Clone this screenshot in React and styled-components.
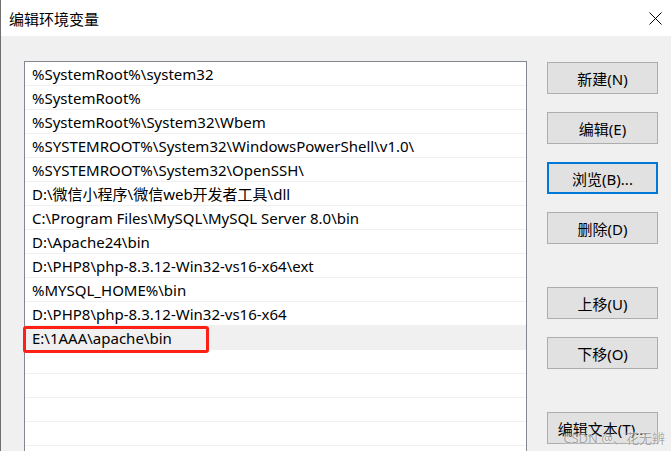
import React from 'react';
import styled, { createGlobalStyle } from 'styled-components';

const GlobalStyle = createGlobalStyle`
  html, body {
    margin: 0;
    padding: 0;
    background: #f0f0f0;
  }
  * { box-sizing: border-box; }
`;

const font = `"Noto Sans", "Noto Sans CJK SC", sans-serif`;

const Window = styled.div`
  position: relative;
  width: 671px;
  height: 451px;
  overflow: hidden;
  background: #f0f0f0;
  border-left: 1px solid #6f6f6f;
  font-family: ${font};
  color: #000;
`;

const TitleBar = styled.div`
  height: 36px;
  background: #fff;
  display: flex;
  align-items: center;
  justify-content: space-between;
  padding: 0 9px 0 8px;
`;

const Title = styled.div`
  font-size: 15px;
  font-family: "Noto Sans CJK SC", sans-serif;
`;

const CloseBtn = styled.div`
  width: 14px;
  height: 14px;
  display: flex;
  align-items: center;
  justify-content: center;
`;

const Body = styled.div`
  display: flex;
  gap: 20px;
  padding: 25px 0 0 23px;
`;

const List = styled.div`
  width: 503px;
  height: 420px;
  background: #fff;
  border: 1px solid #828790;
  flex-shrink: 0;
`;

const Row = styled.div`
  position: relative;
  height: 24px;
  display: flex;
  align-items: center;
  padding-left: 7px;
  font-size: 15px;
  border-bottom: 1px solid #f0f0f0;
  background: ${(p) => (p.$selected ? '#f0f0f0' : '#fff')};
  white-space: nowrap;
`;

const Highlight = styled.div`
  position: absolute;
  z-index: 2;
  left: -2px;
  top: 0;
  width: 186px;
  height: 27px;
  border: 3px solid #ff2015;
  border-radius: 3px;
`;

const Buttons = styled.div`
  display: flex;
  flex-direction: column;
  padding-top: 1px;
`;

const Button = styled.div`
  width: 111px;
  height: 32px;
  margin-top: ${(p) => p.$gap || 0}px;
  background: #e1e1e1;
  border: ${(p) => (p.$focused ? '2px solid #0078d7' : '1px solid #adadad')};
  display: flex;
  align-items: center;
  justify-content: center;
  font-size: 15px;
  font-family: ${font};
`;

const Watermark = styled.div`
  position: absolute;
  z-index: 3;
  right: 6px;
  bottom: 4px;
  font-size: 13px;
  color: rgba(150, 150, 150, 0.85);
  text-shadow: 0 0 2px #fff;
  font-family: ${font};
`;

const paths = [
  '%SystemRoot%\\system32',
  '%SystemRoot%',
  '%SystemRoot%\\System32\\Wbem',
  '%SYSTEMROOT%\\System32\\WindowsPowerShell\\v1.0\\',
  '%SYSTEMROOT%\\System32\\OpenSSH\\',
  'D:\\微信小程序\\微信web开发者工具\\dll',
  'C:\\Program Files\\MySQL\\MySQL Server 8.0\\bin',
  'D:\\Apache24\\bin',
  'D:\\PHP8\\php-8.3.12-Win32-vs16-x64\\ext',
  '%MYSQL_HOME%\\bin',
  'D:\\PHP8\\php-8.3.12-Win32-vs16-x64',
  'E:\\1AAA\\apache\\bin',
  '',
  '',
  '',
  '',
  '',
];

const buttons = [
  { label: '新建(N)', gap: 0 },
  { label: '编辑(E)', gap: 18 },
  { label: '浏览(B)...', gap: 18, focused: true },
  { label: '删除(D)', gap: 18 },
  { label: '上移(U)', gap: 43 },
  { label: '下移(O)', gap: 18 },
  { label: '编辑文本(T)...', gap: 43 },
];

export default function App() {
  return (
    <>
      <GlobalStyle />
      <Window>
        <TitleBar>
          <Title>编辑环境变量</Title>
          <CloseBtn>
            <svg width="13" height="13" viewBox="0 0 13 13">
              <path d="M0.5 0.5 L12.5 12.5 M12.5 0.5 L0.5 12.5" stroke="#000" strokeWidth="1" />
            </svg>
          </CloseBtn>
        </TitleBar>
        <Body>
          <List>
            {paths.map((p, i) => (
              <Row key={i} $selected={i === 11}>
                {p}
                {i === 11 && <Highlight />}
              </Row>
            ))}
          </List>
          <Buttons>
            {buttons.map((b) => (
              <Button key={b.label} $gap={b.gap} $focused={b.focused}>
                {b.label}
              </Button>
            ))}
          </Buttons>
        </Body>
        <Watermark>CSDN @、花无辨</Watermark>
      </Window>
    </>
  );
}
